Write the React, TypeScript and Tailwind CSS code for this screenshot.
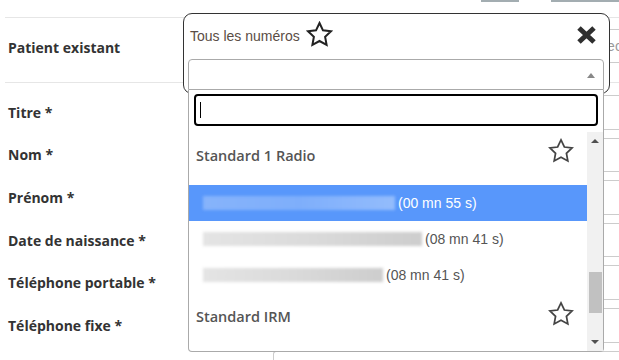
import React from 'react';

const labels = [
  'Titre *',
  'Nom *',
  'Prénom *',
  'Date de naissance *',
  'Téléphone portable *',
  'Téléphone fixe *',
  '',
];

function Star({ size = 26, color = '#444', width = 1.6 }: { size?: number; color?: string; width?: number }) {
  return (
    <svg width={size} height={size} viewBox="0 0 24 24" fill="none">
      <polygon
        points="12,1.8 15.1,8.3 22.2,9.2 17,14.1 18.3,21.2 12,17.8 5.7,21.2 7,14.1 1.8,9.2 8.9,8.3"
        stroke={color}
        strokeWidth={width}
        strokeLinejoin="miter"
      />
    </svg>
  );
}

function CloseIcon() {
  return (
    <svg width="21" height="20" viewBox="0 0 21 20">
      <path d="M3 3 L18 17 M18 3 L3 17" stroke="#2f2f2f" strokeWidth="5" strokeLinecap="butt" />
    </svg>
  );
}

// blurred phone number placeholder
function Blur({ w, active }: { w: number; active?: boolean }) {
  return (
    <div
      className={
        active
          ? 'h-[14px] blur-[1.5px] bg-linear-to-r from-[#86b3fb] via-[#7eaefb] to-[#93bcfc]'
          : 'h-[14px] blur-[1.5px] bg-linear-to-r from-[#e4e4e4] via-[#dadada] to-[#cdcdcd]'
      }
      style={{ width: w }}
    />
  );
}

const items = [
  { w: 192, time: '(00 mn 55 s)', active: true },
  { w: 219, time: '(08 mn 41 s)', active: false },
  { w: 180, time: '(08 mn 41 s)', active: false },
];

export default function App() {
  return (
    <div className="relative w-[619px] h-[360px] overflow-hidden bg-white font-['Liberation_Sans',Arial,sans-serif]">
      {/* Background form */}
      <div className="flex h-[2px]">
        <div className="w-[481px]" />
        <div className="w-[38px] bg-[#a3adb1]" />
        <div className="w-[32px]" />
        <div className="flex-1 bg-[#a3adb1]" />
      </div>

      <div className="mt-[15px] pl-[5px]">
        <div className="flex h-[66px] border-y border-[#e6e6e6]">
          <div className="w-[268px] flex items-center pl-[3px] pb-[5px] font-['Open_Sans',sans-serif] font-bold text-[14px] text-[#333]">
            Patient existant
          </div>
          <div className="flex-1 mt-[11px] h-[34px] border-y border-[#ccc] pl-[324px] flex items-center text-[14px] text-[#999] whitespace-nowrap overflow-hidden">
            Rechercher par nom
          </div>
        </div>

        <div className="mt-[8px]">
          {labels.map((l, i) => (
            <div key={i} className="flex h-[42.6px]">
              <div className="w-[268px] flex items-center pl-[3px] font-['Open_Sans',sans-serif] font-bold text-[14px] text-[#333]">
                {l}
              </div>
              <div className="flex-1 my-[4px] border-y border-l border-[#ccc] rounded-l-[3px]" />
            </div>
          ))}
        </div>
      </div>

      {/* Popup */}
      <div className="absolute left-[183px] top-[13px] w-[427px] h-[81px] border border-[#333] rounded-[9px] bg-white px-[4px]">
        <div className="flex items-center h-[45px] pl-[2px] pr-[8px]">
          <span className="text-[14px] text-[#5a4d45]">Tous les numéros</span>
          <div className="ml-[6px] mb-[5px]">
            <Star size={27} color="#222" width={1.8} />
          </div>
          <div className="ml-auto mb-[4px]">
            <CloseIcon />
          </div>
        </div>
        <div className="relative h-[31px] w-[416px] border border-[#aaa] rounded-t-[4px] bg-white">
          <div className="absolute right-[8px] top-[13px] w-0 h-0 border-x-[4px] border-x-transparent border-b-[5px] border-b-[#888]" />
        </div>
      </div>

      {/* Dropdown */}
      <div className="absolute left-[188px] top-[90px] w-[416px] h-[262px] border border-t-0 border-[#aaa] rounded-b-[4px] bg-white flex flex-col">
        <div className="pt-[4px] pb-[6px] px-[5px]">
          <div className="h-[32px] border-2 border-black rounded-[4px] flex items-center pl-[4px]">
            <div className="w-px h-[16px] bg-black" />
          </div>
        </div>
        <div className="flex flex-1 min-h-0">
          <div className="flex-1 overflow-hidden">
            <div className="flex h-[53px] pl-[7px] pr-[13px] text-[#555] font-['Open_Sans',sans-serif] font-semibold text-[14.5px]">
              <span className="mt-[13px]">Standard 1 Radio</span>
              <div className="ml-auto mt-[6px]">
                <Star />
              </div>
            </div>
            {items.map((it, i) => (
              <div
                key={i}
                className={
                  it.active
                    ? 'flex items-center h-[36px] pl-[14px] bg-[#5897fb] text-white'
                    : 'flex items-center h-[36px] pl-[14px] text-[#555]'
                }
              >
                <Blur w={it.w} active={it.active} />
                <span className="ml-[3px] text-[14px]">{it.time}</span>
              </div>
            ))}
            <div className="flex h-[53px] pl-[7px] pr-[13px] text-[#555] font-['Open_Sans',sans-serif] font-semibold text-[14.5px]">
              <span className="mt-[13px]">Standard IRM</span>
              <div className="ml-auto mt-[8px]">
                <Star />
              </div>
            </div>
          </div>
          {/* scrollbar */}
          <div className="w-[16px] bg-[#f1f1f1] flex flex-col items-center">
            <div className="mt-[7px] w-0 h-0 border-x-[4px] border-x-transparent border-b-[4px] border-b-[#505050]" />
            <div className="mt-[129px] w-[13px] h-[41px] bg-[#c1c1c1]" />
            <div className="mt-auto mb-[7px] w-0 h-0 border-x-[4px] border-x-transparent border-t-[4px] border-t-[#505050]" />
          </div>
        </div>
      </div>
    </div>
  );
}
